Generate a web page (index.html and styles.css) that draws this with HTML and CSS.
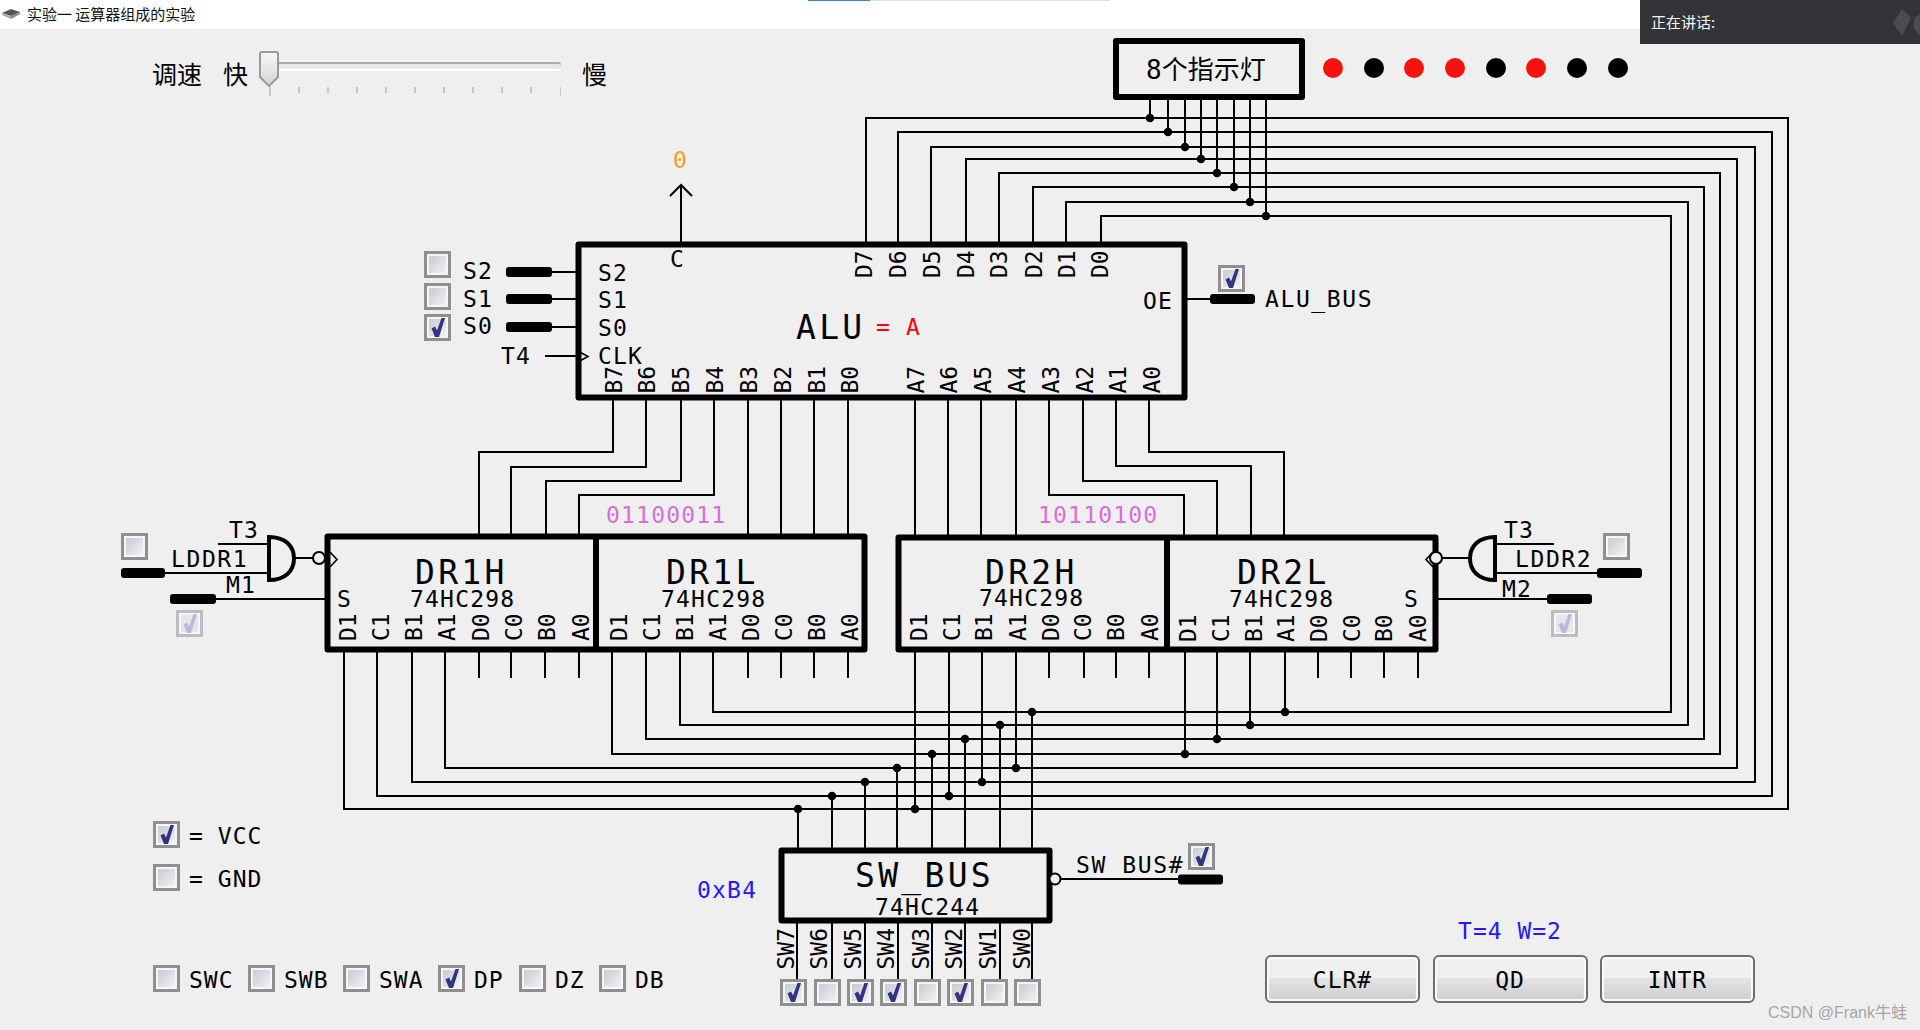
FILE: index.html
```html
<!DOCTYPE html>
<html lang="zh-CN">
<head>
<meta charset="utf-8">
<title>实验一 运算器组成的实验</title>
<link rel="stylesheet" href="styles.css">
</head>
<body>
<svg class="defs" width="0" height="0" aria-hidden="true">
  <defs>
    <linearGradient id="cbg" x1="0" y1="0" x2="1" y2="1">
      <stop offset="0" stop-color="#c6cad4"/>
      <stop offset="1" stop-color="#f2f2f2"/>
    </linearGradient>
    <linearGradient id="thumbg" x1="0" y1="0" x2="0" y2="1">
      <stop offset="0" stop-color="#f8f8f8"/>
      <stop offset="1" stop-color="#d4d4d4"/>
    </linearGradient>
    <symbol id="cb-off" viewBox="0 0 27 27">
      <rect x="1.5" y="1.5" width="24" height="24" fill="#f6f6f6" stroke="#8f8f8f" stroke-width="3"/>
      <rect x="5" y="5" width="17" height="17" fill="url(#cbg)"/>
    </symbol>
    <symbol id="cb-on" viewBox="0 0 27 27">
      <rect x="1.5" y="1.5" width="24" height="24" fill="#f6f6f6" stroke="#8f8f8f" stroke-width="3"/>
      <rect x="5" y="5" width="17" height="17" fill="url(#cbg)"/>
      <path d="M7.5 14.5 L11 12.5 L13 16.5 L17.5 4 L21 4 L15 23 L11 23 Z" fill="#33337f"/>
    </symbol>
    <symbol id="cb-dis" viewBox="0 0 27 27">
      <rect x="1.5" y="1.5" width="24" height="24" fill="#f6f6f6" stroke="#bcbcc2" stroke-width="3"/>
      <rect x="5" y="5" width="17" height="17" fill="#e4e6ec"/>
      <path d="M7.5 14.5 L11 12.5 L13 16.5 L17.5 4 L21 4 L15 23 L11 23 Z" fill="#b6bcd8"/>
    </symbol>
  </defs>
</svg>

<div class="app">
  <header class="titlebar">
    <svg class="appicon" width="18" height="10" viewBox="0 0 18 10"><path d="M0 4 L9 0 L18 3 L9 7 Z" fill="#555"/><path d="M0 4 L9 7 L9 10 L0 6 Z" fill="#aaa"/><path d="M9 7 L18 3 L18 5 L9 10 Z" fill="#888"/></svg>
    <span class="titletext">实验一 运算器组成的实验</span>
  </header>
  <div class="tabline"><span class="tabline-blue"></span><span class="tabline-grey"></span></div>
  <aside class="speaker">
    <span>正在讲话:</span>
    <svg class="speaker-logo" width="27" height="27" viewBox="0 0 27 27"><path d="M9 0 L18 9 L9 27 L0 14 Z" fill="#4b4c51"/><path d="M22 9 L27 5 L27 27 L20 18 Z" fill="#4b4c51"/></svg>
  </aside>

  <main class="workspace">
    <svg class="schematic" viewBox="0 29 1920 1001" width="1920" height="1001">
      <!-- buses -->
      <path class="wire" d="M866 242V118H1788V809H344V652M898 242V132H1772V796H377V652M931 242V147H1755V782H412V652M966 242V159H1737V768H445V652M999 242V173H1720V754H612V652M1033 242V187H1704V739H646V652M1066 242V202H1688V725H680V652M1101 242V216H1671V712H713V652"/>
      <path class="wire" d="M1150 99V118M1168 99V132M1185 99V147M1201 99V159M1217 99V173M1234 99V187M1250 99V202M1266 99V216"/>
      <path class="wire" d="M613 400V452H479V534M646 400V467H511V534M681 400V481H546V534M714 400V495H579V534M748 400V534M781 400V534M814 400V534M848 400V534"/>
      <path class="wire" d="M915 400V535M948 400V535M981 400V535M1016 400V535M1049 400V495H1184V535M1083 400V481H1217V535M1116 400V466H1251V535M1149 400V452H1284V535"/>
      <path class="wire" d="M479 652V678M511 652V678M545 652V678M579 652V678M748 652V678M781 652V678M814 652V678M848 652V678M1049 652V678M1084 652V678M1116 652V678M1149 652V678M1318 652V678M1351 652V678M1384 652V678M1418 652V678"/>
      <path class="wire" d="M915 652V809M949 652V796M982 652V782M1016 652V768M1185 652V754M1217 652V739M1250 652V725M1285 652V712"/>
      <path class="wire" d="M798 809V848M832 796V848M865 782V848M897 768V848M932 754V848M965 739V848M1000 725V848M1032 712V848"/>
      <path class="wire" d="M797 923V979M832 923V979M865 923V979M898 923V979M932 923V979M965 923V979M1000 923V979M1032 923V979"/>
      <path class="dots" d="M1150 118h.01M1168 132h.01M1185 147h.01M1201 159h.01M1217 173h.01M1234 187h.01M1250 202h.01M1266 216h.01M798 809h.01M832 796h.01M865 782h.01M897 768h.01M932 754h.01M965 739h.01M1000 725h.01M1032 712h.01M915 809h.01M949 796h.01M982 782h.01M1016 768h.01M1185 754h.01M1217 739h.01M1250 725h.01M1285 712h.01"/>

      <!-- ALU side wires -->
      <path class="wire" d="M552 272H576M552 299H576M552 327H576M545 356H576M1187 299H1210M681 242V185M670 196L681 185L692 196"/>
      <path class="thin" d="M576 350L588 356.5L576 363"/>
      <rect class="bar" x="506" y="267" width="46" height="10" rx="3"/>
      <rect class="bar" x="506" y="294" width="46" height="10" rx="3"/>
      <rect class="bar" x="506" y="322" width="46" height="10" rx="3"/>
      <rect class="bar" x="1210" y="294" width="45" height="10" rx="3"/>

      <!-- chips -->
      <rect class="chip" x="1116" y="41" width="186" height="56"/>
      <rect class="chip" x="578.5" y="244.5" width="606" height="153"/>
      <rect class="chip" x="327.5" y="536.5" width="537" height="113"/>
      <path class="chip" d="M596 537V650"/>
      <rect class="chip" x="898.5" y="537.5" width="537" height="112"/>
      <path class="chip" d="M1167 537V650"/>
      <rect class="chip" x="781.5" y="850.5" width="268" height="70"/>

      <!-- LDDR1 gate -->
      <path class="gate" d="M269 537C285 537 294 546 294 558.5C294 571 285 580 269 580Z"/>
      <path class="wire" d="M218 544H269M165 573H269M294 558H313M216 599H325"/>
      <circle class="pin-ring" cx="319" cy="558" r="6"/>
      <path class="thin" d="M330 552L337 559.5L330 567"/>
      <rect class="bar" x="121" y="568" width="44" height="10" rx="3"/>
      <rect class="bar" x="170" y="594" width="46" height="10" rx="3"/>

      <!-- LDDR2 gate -->
      <path class="gate" d="M1495 537C1479 537 1470 546 1470 558.5C1470 571 1479 580 1495 580Z"/>
      <path class="wire" d="M1495 544H1554M1495 573H1597M1470 558H1442M1438 599H1547"/>
      <circle class="pin-ring" cx="1436" cy="558" r="6"/>
      <path class="thin" d="M1433 552L1426 559.5L1433 567"/>
      <rect class="bar" x="1597" y="568" width="45" height="10" rx="3"/>
      <rect class="bar" x="1547" y="594" width="45" height="10" rx="3"/>

      <!-- SW_BUS enable -->
      <circle class="pin-ring" cx="1055" cy="879" r="5.5"/>
      <path class="wire" d="M1060 879H1178"/>
      <rect class="bar" x="1178" y="874.5" width="45" height="10" rx="3"/>

      <!-- indicator lamps -->
      <circle class="lamp-on" cx="1333" cy="68" r="10"/>
      <circle class="lamp-off" cx="1374" cy="68" r="10"/>
      <circle class="lamp-on" cx="1414" cy="68" r="10"/>
      <circle class="lamp-on" cx="1455" cy="68" r="10"/>
      <circle class="lamp-off" cx="1496" cy="68" r="10"/>
      <circle class="lamp-on" cx="1536" cy="68" r="10"/>
      <circle class="lamp-off" cx="1577" cy="68" r="10"/>
      <circle class="lamp-off" cx="1618" cy="68" r="10"/>

      <!-- checkboxes -->
      <use href="#cb-off" x="424" y="251" width="27" height="27"/>
      <use href="#cb-off" x="424" y="283" width="27" height="27"/>
      <use href="#cb-on" x="424" y="314" width="27" height="27"/>
      <use href="#cb-on" x="1218" y="265" width="27" height="27"/>
      <use href="#cb-off" x="121" y="533" width="27" height="27"/>
      <use href="#cb-dis" x="176" y="610" width="27" height="27"/>
      <use href="#cb-off" x="1603" y="533" width="27" height="27"/>
      <use href="#cb-dis" x="1551" y="610" width="27" height="27"/>
      <use href="#cb-on" x="1188" y="843" width="27" height="27"/>
      <use href="#cb-on" x="780" y="979" width="27" height="27"/>
      <use href="#cb-off" x="814" y="979" width="27" height="27"/>
      <use href="#cb-on" x="847" y="979" width="27" height="27"/>
      <use href="#cb-on" x="880" y="979" width="27" height="27"/>
      <use href="#cb-off" x="914" y="979" width="27" height="27"/>
      <use href="#cb-on" x="947" y="979" width="27" height="27"/>
      <use href="#cb-off" x="981" y="979" width="27" height="27"/>
      <use href="#cb-off" x="1014" y="979" width="27" height="27"/>

      <!-- texts: top -->
      <text class="lamp-title" x="1146" y="79">8个指示灯</text>
      <text class="t orange" x="673" y="168">0</text>

      <!-- ALU -->
      <text class="t" x="463" y="279">S2</text>
      <text class="t" x="463" y="307">S1</text>
      <text class="t" x="463" y="334">S0</text>
      <text class="t" x="501" y="364">T4</text>
      <text class="t" x="598" y="281">S2</text>
      <text class="t" x="598" y="308">S1</text>
      <text class="t" x="598" y="336">S0</text>
      <text class="t" x="598" y="364">CLK</text>
      <text class="t" x="670" y="267">C</text>
      <text class="t" x="1143" y="309">OE</text>
      <text class="t wide" x="1265" y="307">ALU_BUS</text>
      <text class="big" x="796" y="339">ALU</text>
      <text class="t red" x="876" y="335">= A</text>

      <text class="pin" transform="translate(872 278) rotate(-90)">D7</text>
      <text class="pin" transform="translate(905.5 278) rotate(-90)">D6</text>
      <text class="pin" transform="translate(939.5 278) rotate(-90)">D5</text>
      <text class="pin" transform="translate(973.5 278) rotate(-90)">D4</text>
      <text class="pin" transform="translate(1007 278) rotate(-90)">D3</text>
      <text class="pin" transform="translate(1041.5 278) rotate(-90)">D2</text>
      <text class="pin" transform="translate(1075 278) rotate(-90)">D1</text>
      <text class="pin" transform="translate(1108 278) rotate(-90)">D0</text>

      <text class="pin" transform="translate(622 393.5) rotate(-90)">B7</text>
      <text class="pin" transform="translate(655 393.5) rotate(-90)">B6</text>
      <text class="pin" transform="translate(689 393.5) rotate(-90)">B5</text>
      <text class="pin" transform="translate(723 393.5) rotate(-90)">B4</text>
      <text class="pin" transform="translate(757 393.5) rotate(-90)">B3</text>
      <text class="pin" transform="translate(791 393.5) rotate(-90)">B2</text>
      <text class="pin" transform="translate(825 393.5) rotate(-90)">B1</text>
      <text class="pin" transform="translate(858 393.5) rotate(-90)">B0</text>
      <text class="pin" transform="translate(923.5 393.5) rotate(-90)">A7</text>
      <text class="pin" transform="translate(957 393.5) rotate(-90)">A6</text>
      <text class="pin" transform="translate(990.5 393.5) rotate(-90)">A5</text>
      <text class="pin" transform="translate(1024.5 393.5) rotate(-90)">A4</text>
      <text class="pin" transform="translate(1058.5 393.5) rotate(-90)">A3</text>
      <text class="pin" transform="translate(1092.5 393.5) rotate(-90)">A2</text>
      <text class="pin" transform="translate(1126 393.5) rotate(-90)">A1</text>
      <text class="pin" transform="translate(1160 393.5) rotate(-90)">A0</text>

      <!-- DR1 -->
      <text class="t violet" x="606" y="523">01100011</text>
      <text class="t" x="229" y="538">T3</text>
      <text class="t wide" x="171" y="567">LDDR1</text>
      <text class="t" x="226" y="593">M1</text>
      <text class="t" x="337" y="607">S</text>
      <text class="big" x="415" y="584">DR1H</text>
      <text class="t" x="410" y="607">74HC298</text>
      <text class="big" x="666" y="584">DR1L</text>
      <text class="t" x="661" y="607">74HC298</text>
      <text class="pin" transform="translate(356 641) rotate(-90)">D1</text>
      <text class="pin" transform="translate(389 641) rotate(-90)">C1</text>
      <text class="pin" transform="translate(422 641) rotate(-90)">B1</text>
      <text class="pin" transform="translate(455 641) rotate(-90)">A1</text>
      <text class="pin" transform="translate(489 641) rotate(-90)">D0</text>
      <text class="pin" transform="translate(522 641) rotate(-90)">C0</text>
      <text class="pin" transform="translate(555 641) rotate(-90)">B0</text>
      <text class="pin" transform="translate(588.5 641) rotate(-90)">A0</text>
      <text class="pin" transform="translate(627 641) rotate(-90)">D1</text>
      <text class="pin" transform="translate(660 641) rotate(-90)">C1</text>
      <text class="pin" transform="translate(693 641) rotate(-90)">B1</text>
      <text class="pin" transform="translate(726 641) rotate(-90)">A1</text>
      <text class="pin" transform="translate(759 641) rotate(-90)">D0</text>
      <text class="pin" transform="translate(792 641) rotate(-90)">C0</text>
      <text class="pin" transform="translate(825 641) rotate(-90)">B0</text>
      <text class="pin" transform="translate(858 641) rotate(-90)">A0</text>

      <!-- DR2 -->
      <text class="t violet" x="1038" y="523">10110100</text>
      <text class="big" x="985" y="584">DR2H</text>
      <text class="t" x="979" y="606">74HC298</text>
      <text class="big" x="1237" y="584">DR2L</text>
      <text class="t" x="1229" y="607">74HC298</text>
      <text class="t" x="1404" y="607">S</text>
      <text class="t" x="1504" y="538">T3</text>
      <text class="t wide" x="1515" y="567">LDDR2</text>
      <text class="t" x="1502" y="597">M2</text>
      <text class="pin" transform="translate(927 641) rotate(-90)">D1</text>
      <text class="pin" transform="translate(960 641) rotate(-90)">C1</text>
      <text class="pin" transform="translate(992 641) rotate(-90)">B1</text>
      <text class="pin" transform="translate(1025.5 641) rotate(-90)">A1</text>
      <text class="pin" transform="translate(1058.5 641) rotate(-90)">D0</text>
      <text class="pin" transform="translate(1091 641) rotate(-90)">C0</text>
      <text class="pin" transform="translate(1124 641) rotate(-90)">B0</text>
      <text class="pin" transform="translate(1157.5 641) rotate(-90)">A0</text>
      <text class="pin" transform="translate(1196 642) rotate(-90)">D1</text>
      <text class="pin" transform="translate(1229 642) rotate(-90)">C1</text>
      <text class="pin" transform="translate(1262 642) rotate(-90)">B1</text>
      <text class="pin" transform="translate(1294 642) rotate(-90)">A1</text>
      <text class="pin" transform="translate(1327 642) rotate(-90)">D0</text>
      <text class="pin" transform="translate(1360 642) rotate(-90)">C0</text>
      <text class="pin" transform="translate(1392 642) rotate(-90)">B0</text>
      <text class="pin" transform="translate(1426 642) rotate(-90)">A0</text>

      <!-- SW_BUS -->
      <text class="big" x="855" y="887">SW_BUS</text>
      <text class="t" x="875" y="915">74HC244</text>
      <text class="t wide" x="1076" y="873">SW_BUS#</text>
      <text class="t blue" x="697" y="898">0xB4</text>
      <text class="pin" transform="translate(794 969.5) rotate(-90)">SW7</text>
      <text class="pin" transform="translate(827 969.5) rotate(-90)">SW6</text>
      <text class="pin" transform="translate(861 969.5) rotate(-90)">SW5</text>
      <text class="pin" transform="translate(894 969.5) rotate(-90)">SW4</text>
      <text class="pin" transform="translate(929 969.5) rotate(-90)">SW3</text>
      <text class="pin" transform="translate(962 969.5) rotate(-90)">SW2</text>
      <text class="pin" transform="translate(996 969.5) rotate(-90)">SW1</text>
      <text class="pin" transform="translate(1029.5 969.5) rotate(-90)">SW0</text>
    </svg>

    <section class="speedbar">
      <span class="cjk">调速</span>
      <span class="cjk">快</span>
      <div class="slider">
        <div class="groove"></div>
        <svg class="thumb" width="20" height="36" viewBox="0 0 20 36"><path d="M3 1H17Q19 1 19 3V26L10 35L1 26V3Q1 1 3 1Z" fill="url(#thumbg)" stroke="#9a9a9a" stroke-width="2"/></svg>
        <div class="ticks">
          <i class="tick tick-long"></i><i class="tick"></i><i class="tick"></i><i class="tick"></i><i class="tick"></i><i class="tick"></i><i class="tick"></i><i class="tick"></i><i class="tick"></i><i class="tick"></i><i class="tick tick-long"></i>
        </div>
      </div>
      <span class="cjk">慢</span>
    </section>

    <section class="panel">
      <div class="controls">
        <div class="legend">
          <label class="check"><svg class="cb" viewBox="0 0 27 27"><use href="#cb-on"/></svg><span class="eq">=</span><span>VCC</span></label>
          <label class="check"><svg class="cb" viewBox="0 0 27 27"><use href="#cb-off"/></svg><span class="eq">=</span><span>GND</span></label>
        </div>
        <div class="mode">
          <label class="check"><svg class="cb" viewBox="0 0 27 27"><use href="#cb-off"/></svg><span>SWC</span></label>
          <label class="check"><svg class="cb" viewBox="0 0 27 27"><use href="#cb-off"/></svg><span>SWB</span></label>
          <label class="check"><svg class="cb" viewBox="0 0 27 27"><use href="#cb-off"/></svg><span>SWA</span></label>
          <label class="check"><svg class="cb" viewBox="0 0 27 27"><use href="#cb-on"/></svg><span>DP</span></label>
          <label class="check"><svg class="cb" viewBox="0 0 27 27"><use href="#cb-off"/></svg><span>DZ</span></label>
          <label class="check"><svg class="cb" viewBox="0 0 27 27"><use href="#cb-off"/></svg><span>DB</span></label>
        </div>
      </div>
      <div class="actions">
        <div class="timing">T=4 W=2</div>
        <div class="buttons">
          <button class="btn">CLR#</button>
          <button class="btn">QD</button>
          <button class="btn">INTR</button>
        </div>
      </div>
    </section>
    <div class="watermark">CSDN @Frank牛蛙</div>
  </main>
</div>
</body>
</html>
```
FILE: styles.css
```css
* { box-sizing: border-box; }
html, body { margin: 0; padding: 0; background: #efefef; }
.defs { position: absolute; }

.app {
  position: relative;
  width: 1920px;
  height: 1030px;
  display: flex;
  flex-direction: column;
  overflow: hidden;
  font-family: "DejaVu Sans Mono", "Noto Sans CJK SC", monospace;
}

/* title bar */
.titlebar {
  height: 29px;
  flex: none;
  background: #fff;
  display: flex;
  align-items: center;
  padding: 0 0 2px 2px;
  gap: 7px;
  font-family: "Noto Sans CJK SC", sans-serif;
  font-size: 15px;
  color: #111;
}
.appicon { flex: none; }

.tabline { position: absolute; left: 808px; top: 0; display: flex; height: 1px; }
.tabline-blue { width: 62px; background: #3b7fe0; }
.tabline-grey { width: 240px; background: #e2e2e2; }

.speaker {
  position: absolute;
  right: 0;
  top: 0;
  width: 280px;
  height: 44px;
  z-index: 2;
  background: #333438;
  color: #f4f4f4;
  font-family: "Noto Sans CJK SC", sans-serif;
  font-size: 15px;
  display: flex;
  align-items: center;
  padding: 0 0 2px 11px;
}
.speaker-logo { position: absolute; right: 0; top: 9px; }

/* work area */
.workspace {
  position: relative;
  flex: 1;
  display: flex;
  flex-direction: column;
  justify-content: space-between;
  background: #efefef;
}
.schematic { position: absolute; left: 0; top: 0; }

.wire { fill: none; stroke: #000; stroke-width: 2; }
.thin { fill: none; stroke: #000; stroke-width: 1.6; }
.dots { fill: none; stroke: #000; stroke-width: 8.5; stroke-linecap: round; }
.bar { fill: #000; }
.chip { fill: none; stroke: #000; stroke-width: 6; stroke-linejoin: round; }
.gate { fill: none; stroke: #000; stroke-width: 4; }
.pin-ring { fill: #efefef; stroke: #000; stroke-width: 2; }
.lamp-on { fill: #f5130d; }
.lamp-off { fill: #000; }

.schematic text {
  font-family: "DejaVu Sans Mono", "Noto Sans CJK SC", monospace;
  fill: #000;
}
.schematic .t { font-size: 23px; letter-spacing: 1.2px; }
.schematic .wide { letter-spacing: 1.6px; }
.schematic .big { font-size: 33px; letter-spacing: 3.3px; }
.schematic .pin { font-size: 23px; }
.schematic .lamp-title { font-size: 26px; }
.schematic .orange { fill: #f0a01e; }
.schematic .violet { fill: #d86ed8; }
.schematic .red { fill: #f00; }
.schematic .blue { fill: #2418ff; }

/* speed control */
.speedbar {
  position: relative;
  display: flex;
  align-items: flex-start;
  padding: 22px 0 0 152px;
}
.cjk {
  font-family: "Noto Sans CJK SC", sans-serif;
  font-size: 25px;
  line-height: 25px;
  margin-top: 10px;
  color: #000;
}
.cjk + .cjk { margin-left: 21px; }
.slider { position: relative; width: 302px; height: 45px; margin: 0 21px 0 11px; }
.groove {
  position: absolute;
  left: 10px;
  right: 0;
  top: 11px;
  height: 9px;
  background: #e4e8e8;
  border-top: 2px solid #aaa;
  border-bottom: 2px solid #fff;
  border-radius: 0 3px 3px 0;
}
.thumb { position: absolute; left: 0; top: 0; }
.ticks {
  display: flex;
  justify-content: space-between;
  align-items: flex-start;
  padding: 36px 0 0 10px;
}
.tick { display: block; width: 1.5px; height: 6px; background: #c6c6c6; }
.tick-long { height: 9px; }

/* bottom panel */
.panel {
  position: relative;
  height: 209px;
  display: flex;
  justify-content: space-between;
  padding: 0 165px 0 153px;
  font-size: 23px;
  letter-spacing: 1px;
  color: #000;
}
.legend { display: flex; flex-direction: column; gap: 16px; }
.mode { display: flex; margin-top: 74px; }
.check { display: flex; align-items: center; height: 27px; gap: 9px; }
.check span { padding-top: 2px; }
.cb { width: 27px; height: 27px; flex: none; }
.legend .eq { margin-right: 5px; }
.mode .check:nth-child(1), .mode .check:nth-child(2), .mode .check:nth-child(3) { width: 95px; }
.mode .check:nth-child(4) { width: 81px; }
.mode .check:nth-child(5) { width: 80px; }

.actions { display: flex; flex-direction: column; align-items: center; padding-top: 97px; }
.timing { color: #2418ff; height: 37px; line-height: 26px; }
.buttons { display: flex; gap: 12.5px; }
.btn {
  width: 155px;
  height: 48px;
  border: 2px solid #6e6e6e;
  border-radius: 6px;
  background: linear-gradient(#f0f0f0 0, #f0f0f0 48%, #e4e4e4 48%, #cdcdcd 100%);
  box-shadow: inset 0 0 0 2px #fafafa;
  font-family: inherit;
  font-size: 23px;
  letter-spacing: 1px;
  color: #000;
  padding: 2px 0 0;
}

.watermark {
  position: absolute;
  left: 1768px;
  top: 975px;
  font-family: "Liberation Sans", "Noto Sans CJK SC", sans-serif;
  font-size: 16px;
  line-height: 18px;
  color: #a6a6a6;
}
```
